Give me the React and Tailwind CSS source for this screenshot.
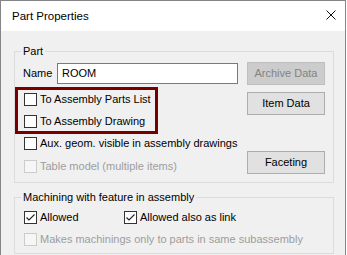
const Check = ({ checked, disabled }) => (
  <span
    className={`flex h-[13px] w-[13px] shrink-0 items-center justify-center border ${
      disabled ? 'border-[#cccccc] bg-[#f6f6f6]' : 'border-[#333333] bg-white'
    }`}
  >
    {checked && (
      <svg width="11" height="11" viewBox="0 0 11 11" fill="none">
        <path d="M1.5 5.5 L4 8 L9.5 2.5" stroke="#222" strokeWidth="1.1" />
      </svg>
    )}
  </span>
);

const CheckRow = ({ label, checked, disabled, className = '' }) => (
  <label className={`flex h-[19px] items-center gap-[3px] ${className}`}>
    <Check checked={checked} disabled={disabled} />
    <span className={disabled ? 'text-[#9d9d9d]' : 'text-black'}>{label}</span>
  </label>
);

const WinButton = ({ children, disabled, className = '' }) => (
  <button
    className={`flex h-[23px] w-[78px] items-center justify-center border ${
      disabled
        ? 'border-[#bfbfbf] bg-[#cccccc] text-[#838383]'
        : 'border-[#adadad] bg-[#e1e1e1] text-black'
    } ${className}`}
  >
    {children}
  </button>
);

export default function App() {
  return (
    <div className="h-[255px] w-[347px] overflow-hidden bg-white font-['Liberation_Sans',Arial,sans-serif] text-[11px] leading-[13px] text-black">
      <div className="h-full w-[346px] border-x border-t border-[#858585] bg-[#f0f0f0]">
        {/* title bar */}
        <div className="flex h-[30px] items-center justify-between bg-white pl-[11px] pr-[9px]">
          <span className="text-[11.5px]">Part Properties</span>
          <svg width="10" height="10" viewBox="0 0 10 10" className="mb-[2px]">
            <path d="M0.5 0.5 L9.5 9.5 M9.5 0.5 L0.5 9.5" stroke="#111" strokeWidth="1" />
          </svg>
        </div>

        <div className="pl-[13px] pt-[14px]">
          {/* Part group */}
          <fieldset className="m-0 w-[320px] border border-[#dcdcdc] p-0 pb-[6px]">
            <legend className="ml-[6px] px-[2px] leading-[13px]">Part</legend>
            <div className="flex pt-[4px]">
              <div className="flex-1">
                <div className="flex h-[23px] items-center pl-[8px]">
                  <span className="w-[34px]">Name</span>
                  <div className="flex h-[21px] w-[181px] items-center border border-[#7a7a7a] bg-white pl-[4px]">
                    ROOM
                  </div>
                </div>
                <div className="mt-[2px] w-[143px] border-[3px] border-[#760000] pl-[6px]">
                  <CheckRow label="To Assembly Parts List" />
                  <CheckRow label="To Assembly Drawing" className="mt-[3px]" />
                </div>
                <CheckRow label="Aux. geom. visible in assembly drawings" className="pl-[9px]" />
                <CheckRow label="Table model (multiple items)" disabled className="mt-[4px] pl-[9px]" />
              </div>
              <div className="flex flex-col pr-[8px]">
                <WinButton disabled>Archive Data</WinButton>
                <WinButton className="mt-[7px]">Item Data</WinButton>
                <WinButton className="mt-[36px]">Faceting</WinButton>
              </div>
            </div>
          </fieldset>

          {/* Machining group */}
          <fieldset className="m-0 mt-[8px] w-[320px] border border-[#dcdcdc] p-0 pb-[4px]">
            <legend className="ml-[6px] px-[2px] leading-[13px]">Machining with feature in assembly</legend>
            <div className="flex pl-[9px] pt-[4px]">
              <CheckRow label="Allowed" checked className="w-[100px]" />
              <CheckRow label="Allowed also as link" checked />
            </div>
            <CheckRow
              label="Makes machinings only to parts in same subassembly"
              disabled
              className="mt-[3px] pl-[9px]"
            />
          </fieldset>
        </div>
      </div>
    </div>
  );
}
